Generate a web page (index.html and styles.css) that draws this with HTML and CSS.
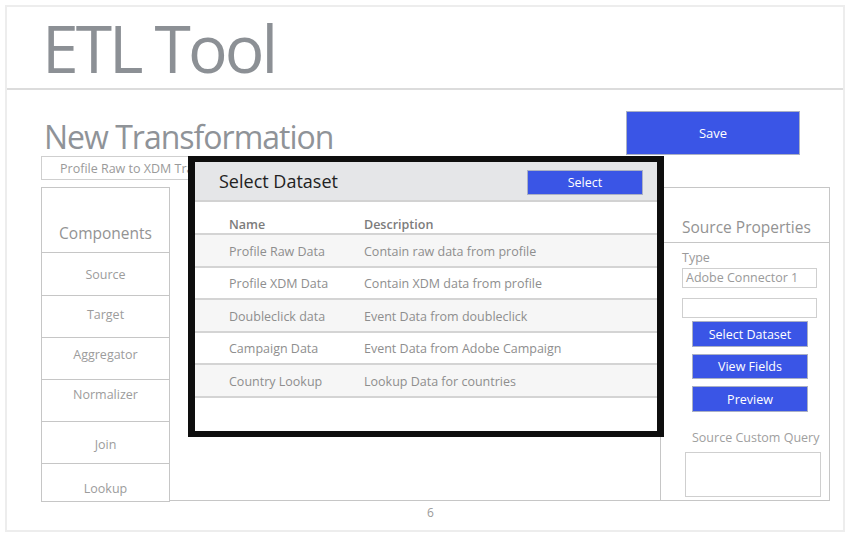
FILE: index.html
```html
<!DOCTYPE html>
<html>
<head>
<meta charset="utf-8">
<title>ETL Tool</title>
<link rel="stylesheet" href="styles.css">
</head>
<body>
<div class="page">
  <header class="header">
    <h1 class="app-title">ETL Tool</h1>
  </header>
  <main class="content">
    <div class="title-row">
      <h2 class="page-title">New Transformation</h2>
      <button class="btn btn-save">Save</button>
    </div>
    <div class="name-input">Profile Raw to XDM Transformation</div>
    <div class="canvas">
      <aside class="components">
        <div class="comp-head">Components</div>
        <div class="comp comp-source">Source</div>
        <div class="comp comp-target">Target</div>
        <div class="comp comp-agg">Aggregator</div>
        <div class="comp comp-norm">Normalizer</div>
        <div class="comp comp-join">Join</div>
        <div class="comp comp-lookup">Lookup</div>
      </aside>
      <section class="workspace"></section>
      <aside class="props">
        <div class="props-head">Source Properties</div>
        <div class="props-body">
          <div class="field-label">Type</div>
          <div class="field">Adobe Connector 1</div>
          <div class="field field-empty"></div>
          <button class="btn btn-prop btn-select-ds">Select Dataset</button>
          <button class="btn btn-prop btn-view">View Fields</button>
          <button class="btn btn-prop btn-preview">Preview</button>
          <div class="query-label">Source Custom Query</div>
          <div class="query-box"></div>
        </div>
      </aside>
    </div>
    <div class="footer">6</div>
  </main>

  <div class="modal">
    <div class="modal-head">
      <div class="modal-title">Select Dataset</div>
      <button class="btn btn-modal">Select</button>
    </div>
    <div class="table">
      <div class="row row-head">
        <div class="cell cell-name">Name</div>
        <div class="cell">Description</div>
      </div>
      <div class="row row-alt">
        <div class="cell cell-name">Profile Raw Data</div>
        <div class="cell">Contain raw data from profile</div>
      </div>
      <div class="row">
        <div class="cell cell-name">Profile XDM Data</div>
        <div class="cell">Contain XDM data from profile</div>
      </div>
      <div class="row row-alt">
        <div class="cell cell-name">Doubleclick data</div>
        <div class="cell">Event Data from doubleclick</div>
      </div>
      <div class="row">
        <div class="cell cell-name">Campaign Data</div>
        <div class="cell">Event Data from Adobe Campaign</div>
      </div>
      <div class="row row-alt">
        <div class="cell cell-name">Country Lookup</div>
        <div class="cell">Lookup Data for countries</div>
      </div>
    </div>
  </div>
</div>
</body>
</html>
```

FILE: styles.css
```css
* { box-sizing: border-box; }

html, body {
  margin: 0;
  padding: 0;
  background: #ffffff;
}

body {
  font-family: "Open Sans", "Noto Sans", "Liberation Sans", sans-serif;
  color: #8e8e8e;
}

.page {
  position: relative;
  margin: 5px 0 0 5px;
  width: 840px;
  height: 527px;
  border: 2px solid #ededed;
}

.header {
  height: 83px;
  border-bottom: 2px solid #dcdcdc;
  padding: 7px 0 0 35px;
}

.app-title {
  margin: 0;
  font-size: 66px;
  font-weight: 400;
  line-height: 1;
  letter-spacing: -3px;
  color: #8c9095;
}

.content {
  padding: 21px 0 0 34px;
  width: 823px;
}

.title-row {
  display: flex;
  justify-content: space-between;
  align-items: flex-start;
  height: 45px;
  padding-right: 30px;
}

.page-title {
  margin: 10px 0 0 3px;
  font-size: 32px;
  font-weight: 400;
  line-height: 1;
  letter-spacing: -1px;
  color: #8f9398;
}

.btn {
  font-family: inherit;
  border: 1px solid #aab0c4;
  background: #3a55e6;
  color: #ffffff;
  padding: 0;
  cursor: pointer;
}

.btn-save {
  width: 174px;
  height: 44px;
  font-size: 13px;
}

.name-input {
  width: 302px;
  height: 24px;
  border: 1px solid #cfcfcf;
  font-size: 12.5px;
  line-height: 23px;
  padding-left: 18px;
  color: #9a9a9a;
  white-space: nowrap;
  overflow: hidden;
}

.canvas {
  margin-top: 7px;
  height: 315px;
  display: grid;
  grid-template-columns: 129px 490px 170px;
}

.components {
  border: 1px solid #c6c6c6;
  display: flex;
  flex-direction: column;
}

.comp-head {
  height: 65px;
  border-bottom: 1px solid #c6c6c6;
  display: flex;
  align-items: flex-end;
  justify-content: center;
  padding-bottom: 8px;
  font-size: 15.5px;
  color: #939393;
}

.comp {
  height: 42px;
  border-bottom: 1px solid #c6c6c6;
  display: flex;
  align-items: center;
  justify-content: center;
  font-size: 12.5px;
  color: #9c9c9c;
}

.comp-source { height: 43px; }
.comp-target { padding-bottom: 4px; }
.comp-agg { padding-bottom: 8px; }
.comp-norm { padding-bottom: 12px; }
.comp-join { padding-top: 4px; }
.comp-lookup { flex: 1; border-bottom: none; padding-top: 12px; }

.workspace {
  border-bottom: 1px solid #c6c6c6;
  height: 314px;
}

.props {
  border: 1px solid #c6c6c6;
  height: 314px;
}

.props-head {
  height: 55px;
  border-bottom: 1px solid #c6c6c6;
  display: flex;
  align-items: flex-end;
  padding: 0 0 4px 21px;
  font-size: 15.5px;
  color: #939393;
  white-space: nowrap;
}

.props-body {
  padding-left: 21px;
  display: flex;
  flex-direction: column;
  align-items: flex-start;
}

.field-label {
  margin-top: 6px;
  font-size: 12.5px;
  line-height: 18px;
  color: #9a9a9a;
}

.field {
  margin-top: 1px;
  width: 135px;
  height: 20px;
  border: 1px solid #cfcfcf;
  font-size: 12.5px;
  line-height: 18px;
  padding-left: 3px;
  color: #9a9a9a;
  white-space: nowrap;
}

.field-empty { margin-top: 10px; }

.btn-prop {
  margin-left: 10px;
  width: 116px;
  height: 26px;
  font-size: 12.5px;
}

.btn-select-ds { margin-top: 3px; }
.btn-view { margin-top: 7px; height: 25px; }
.btn-preview { margin-top: 7px; }

.query-label {
  margin: 17px 0 0 10px;
  font-size: 12.5px;
  line-height: 18px;
  color: #a0a0a0;
  white-space: nowrap;
}

.query-box {
  margin: 5px 0 0 3px;
  width: 136px;
  height: 45px;
  border: 1px solid #cfcfcf;
}

.footer {
  width: 779px;
  margin-top: 2px;
  text-align: center;
  font-size: 12px;
  line-height: 18px;
  color: #9a9a9a;
}

/* modal */
.modal {
  position: absolute;
  left: 181px;
  top: 149px;
  width: 476px;
  height: 281px;
  border: 6px solid #0e0e0e;
  border-left-width: 7px;
  border-right-width: 7px;
  background: #ffffff;
}

.modal-head {
  height: 40px;
  background: #e5e6e8;
  border-bottom: 2px solid #d2d2d2;
  display: flex;
  align-items: flex-start;
  justify-content: space-between;
  padding: 0 14px 0 24px;
}

.modal-title {
  margin-top: 6px;
  font-size: 18px;
  line-height: 26px;
  color: #222222;
}

.btn-modal {
  margin-top: 8px;
  width: 116px;
  height: 25px;
  font-size: 12.5px;
}

.row {
  display: flex;
  align-items: center;
  height: 32.5px;
  border-bottom: 2px solid #d4d4d4;
  padding-left: 34px;
  padding-top: 2px;
  font-size: 12.5px;
  color: #8e8e8e;
}

.row-alt { background: #f6f6f6; }

.row-head {
  height: 33px;
  font-weight: 600;
  color: #7c7c7c;
  padding-top: 14px;
}

.cell { white-space: nowrap; }
.cell-name { width: 135px; }
```
